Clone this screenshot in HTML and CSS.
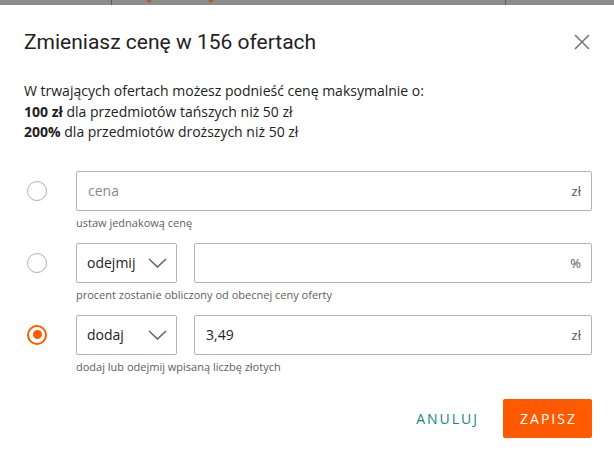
FILE: index.html
```html
<!DOCTYPE html>
<html lang="pl">
<head>
<meta charset="utf-8">
<link rel="stylesheet" href="styles.css">
</head>
<body>
<div class="backdrop">
  <div class="cell c1"></div>
  <div class="cell c2"><span class="mark m1"></span><span class="mark m2"></span></div>
  <div class="cell c3"></div>
</div>
<div class="dialog">
  <div class="header">
    <h1 class="title">Zmieniasz cenę w 156 ofertach</h1>
    <button class="close" aria-label="Zamknij">
      <svg width="16" height="16" viewBox="0 0 16 16"><path d="M1 1 L15 15 M15 1 L1 15" stroke="#777" stroke-width="1.6" fill="none"/></svg>
    </button>
  </div>
  <div class="intro">
    <p>W trwających ofertach możesz podnieść cenę maksymalnie o:</p>
    <p><b>100 zł</b> dla przedmiotów tańszych niż 50 zł</p>
    <p><b>200%</b> dla przedmiotów droższych niż 50 zł</p>
  </div>
  <div class="options">
    <div class="option">
      <div class="radio-col"><span class="radio"></span></div>
      <div class="fields">
        <div class="controls">
          <div class="input"><span class="placeholder">cena</span><span class="suffix">zł</span></div>
        </div>
        <div class="help">ustaw jednakową cenę</div>
      </div>
    </div>
    <div class="option">
      <div class="radio-col"><span class="radio"></span></div>
      <div class="fields">
        <div class="controls">
          <div class="select"><span>odejmij</span><svg class="chev" width="19" height="10" viewBox="0 0 19 10"><path d="M1 1 L9.5 9 L18 1" stroke="#666" stroke-width="1.6" fill="none"/></svg></div>
          <div class="input"><span class="value"></span><span class="suffix">%</span></div>
        </div>
        <div class="help">procent zostanie obliczony od obecnej ceny oferty</div>
      </div>
    </div>
    <div class="option">
      <div class="radio-col"><span class="radio checked"></span></div>
      <div class="fields">
        <div class="controls">
          <div class="select"><span>dodaj</span><svg class="chev" width="19" height="10" viewBox="0 0 19 10"><path d="M1 1 L9.5 9 L18 1" stroke="#666" stroke-width="1.6" fill="none"/></svg></div>
          <div class="input"><span class="value">3,49</span><span class="suffix">zł</span></div>
        </div>
        <div class="help">dodaj lub odejmij wpisaną liczbę złotych</div>
      </div>
    </div>
  </div>
  <div class="footer">
    <button class="btn-cancel">ANULUJ</button>
    <button class="btn-save">ZAPISZ</button>
  </div>
</div>
</body>
</html>
```

FILE: styles.css
```css
* { box-sizing: border-box; }
html, body { margin: 0; padding: 0; background: #fff; }
body { font-family: "Open Sans", "Liberation Sans", sans-serif; color: #222; }

.backdrop { display: flex; height: 5px; background: #8c8c8c; }
.cell { height: 5px; }
.c1 { width: 112px; border-right: 1px solid #5e5e5e; }
.c2 { width: 394px; border-right: 1px solid #5e5e5e; display: flex; }
.c3 { flex: 1; }
.mark { display: block; width: 4px; height: 2px; background: #b4592a; }
.m1 { margin-left: 35px; }
.m2 { margin-left: 58px; }

.dialog { padding: 0 22px 0 24px; }

.header { display: flex; justify-content: space-between; align-items: center; padding-top: 24px; }
.title { margin: 0; font-family: Roboto, "Liberation Sans", sans-serif; font-weight: 400; font-size: 21px; line-height: 26px; color: #222; }
.close { border: 0; background: none; padding: 0; margin-right: 2px; width: 16px; height: 16px; display: flex; }

.intro { margin-top: 26px; font-size: 14px; line-height: 20.5px; color: #222; }
.intro p { margin: 0; }
.intro b { font-weight: 700; }

.options { margin-top: 28px; display: flex; flex-direction: column; gap: 12px; }
.option { display: flex; }
.radio-col { width: 52px; height: 40px; display: flex; align-items: center; padding-left: 3px; }
.radio { width: 20px; height: 20px; border-radius: 50%; border: 1px solid #b0b0b0; display: flex; align-items: center; justify-content: center; }
.radio.checked { border: 2px solid #ff5a00; }
.radio.checked::after { content: ""; width: 9px; height: 9px; border-radius: 50%; background: #ff5a00; }

.fields { flex: 1; }
.controls { display: flex; gap: 17px; }
.input, .select { height: 40px; border: 1px solid #b3b3b3; border-radius: 2px; display: flex; align-items: center; font-size: 14px; color: #222; }
.input { flex: 1; padding: 0 10px 0 11px; justify-content: space-between; }
.select { width: 101px; padding: 0 9px 0 10px; justify-content: space-between; }
.placeholder { color: #8a8a8a; }
.suffix { color: #555; font-size: 13px; }
.chev { display: block; }

.help { margin-top: 4px; font-size: 11px; line-height: 16px; color: #5e5e5e; }

.footer { display: flex; justify-content: flex-end; align-items: center; margin-top: 24px; gap: 11px; }
.btn-cancel, .btn-save { font-family: "Open Sans", "Liberation Sans", sans-serif; font-size: 14px; letter-spacing: 2px; border: 0; height: 39px; cursor: pointer; }
.btn-cancel { background: none; color: #138a78; padding: 0 13px; }
.btn-save { background: #ff5a00; color: #fff; padding: 0 14px 0 16px; border-radius: 2px; width: 89px; }
```
